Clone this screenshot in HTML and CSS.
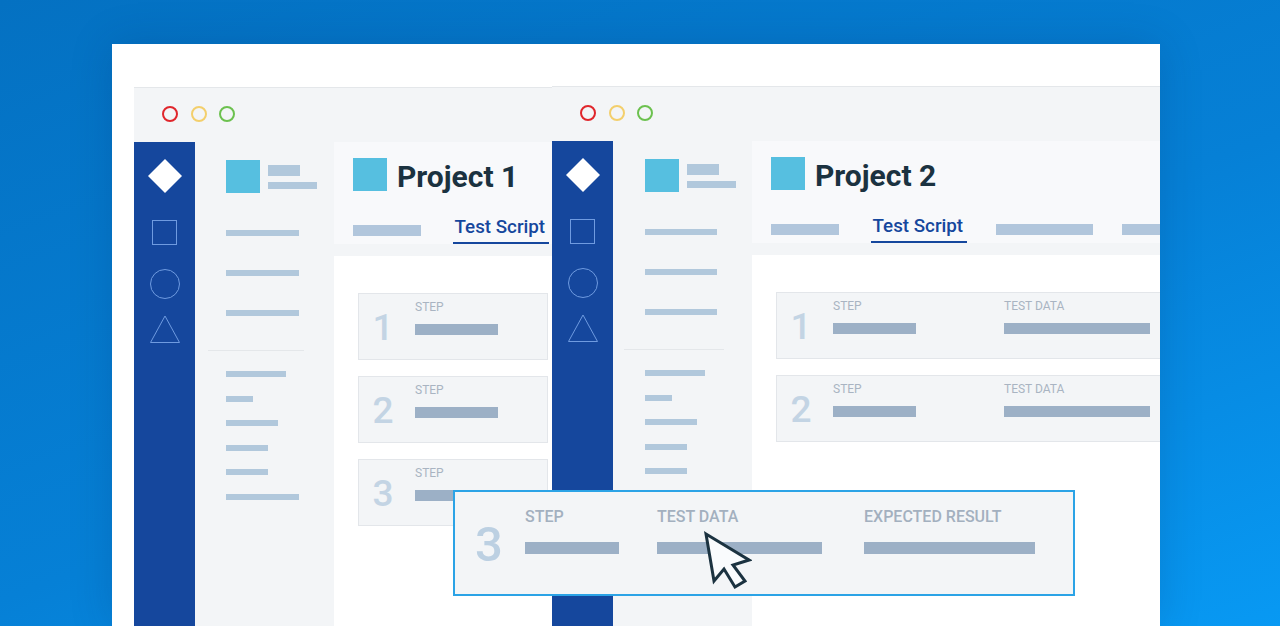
FILE: index.html
```html
<!DOCTYPE html>
<html lang="en">
<head>
  <meta charset="UTF-8" />
  <title>Test Script Projects</title>
  <link rel="stylesheet" href="styles.css">
</head>
<body>

  <div class="sheet">

    <!-- Project 1 window -->
    <div class="window window-one">
      <div class="titlebar">
        <span class="dot dot-red"></span>
        <span class="dot dot-yellow"></span>
        <span class="dot dot-green"></span>
      </div>
      <div class="window-body">
        <div class="rail">
          <svg class="rail-diamond" width="34" height="34" viewBox="0 0 34 34"><path d="M17 0L34 17L17 34L0 17Z" fill="#fff"/></svg>
          <svg class="rail-square" width="25" height="25" viewBox="0 0 25 25"><rect x=".5" y=".5" width="24" height="24" fill="none" stroke="#6f9be0"/></svg>
          <svg class="rail-circle" width="30" height="30" viewBox="0 0 30 30"><circle cx="15" cy="15" r="14.5" fill="none" stroke="#6f9be0"/></svg>
          <svg class="rail-triangle" width="30" height="28" viewBox="0 0 30 28"><path d="M15 1L29.5 27.5H.5Z" fill="none" stroke="#6f9be0"/></svg>
        </div>
        <div class="panel">
          <div class="panel-logo">
            <span class="logo"></span>
            <div class="logo-lines">
              <span class="bar line-short"></span>
              <span class="bar line-long"></span>
            </div>
          </div>
          <div class="nav">
            <span class="bar nav-bar w-73"></span>
            <span class="bar nav-bar w-73"></span>
            <span class="bar nav-bar w-73"></span>
          </div>
          <div class="divider"></div>
          <div class="subnav">
            <span class="bar nav-bar w-60"></span>
            <span class="bar nav-bar w-27"></span>
            <span class="bar nav-bar w-52"></span>
            <span class="bar nav-bar w-42"></span>
            <span class="bar nav-bar w-42"></span>
            <span class="bar nav-bar w-73"></span>
          </div>
        </div>
        <div class="main">
          <div class="header">
            <div class="title-row">
              <span class="logo"></span>
              <h1>Project 1</h1>
            </div>
            <div class="tabs">
              <span class="bar tab-bar w-68"></span>
              <span class="tab">Test Script</span>
            </div>
          </div>
          <div class="band"></div>
          <div class="steps">
            <div class="step">
              <span class="step-num">1</span>
              <div class="step-col">
                <span class="step-label">STEP</span>
                <span class="bar step-bar w-83"></span>
              </div>
            </div>
            <div class="step">
              <span class="step-num">2</span>
              <div class="step-col">
                <span class="step-label">STEP</span>
                <span class="bar step-bar w-83"></span>
              </div>
            </div>
            <div class="step">
              <span class="step-num">3</span>
              <div class="step-col">
                <span class="step-label">STEP</span>
                <span class="bar step-bar w-83"></span>
              </div>
            </div>
          </div>
        </div>
      </div>
    </div>

    <!-- Project 2 window -->
    <div class="window window-two">
      <div class="titlebar">
        <span class="dot dot-red"></span>
        <span class="dot dot-yellow"></span>
        <span class="dot dot-green"></span>
      </div>
      <div class="window-body">
        <div class="rail">
          <svg class="rail-diamond" width="34" height="34" viewBox="0 0 34 34"><path d="M17 0L34 17L17 34L0 17Z" fill="#fff"/></svg>
          <svg class="rail-square" width="25" height="25" viewBox="0 0 25 25"><rect x=".5" y=".5" width="24" height="24" fill="none" stroke="#6f9be0"/></svg>
          <svg class="rail-circle" width="30" height="30" viewBox="0 0 30 30"><circle cx="15" cy="15" r="14.5" fill="none" stroke="#6f9be0"/></svg>
          <svg class="rail-triangle" width="30" height="28" viewBox="0 0 30 28"><path d="M15 1L29.5 27.5H.5Z" fill="none" stroke="#6f9be0"/></svg>
        </div>
        <div class="panel">
          <div class="panel-logo">
            <span class="logo"></span>
            <div class="logo-lines">
              <span class="bar line-short"></span>
              <span class="bar line-long"></span>
            </div>
          </div>
          <div class="nav">
            <span class="bar nav-bar w-72"></span>
            <span class="bar nav-bar w-72"></span>
            <span class="bar nav-bar w-72"></span>
          </div>
          <div class="divider"></div>
          <div class="subnav">
            <span class="bar nav-bar w-60"></span>
            <span class="bar nav-bar w-27"></span>
            <span class="bar nav-bar w-52"></span>
            <span class="bar nav-bar w-42"></span>
            <span class="bar nav-bar w-42"></span>
            <span class="bar nav-bar w-72"></span>
          </div>
        </div>
        <div class="main">
          <div class="header">
            <div class="title-row">
              <span class="logo"></span>
              <h1>Project 2</h1>
            </div>
            <div class="tabs">
              <span class="bar tab-bar w-68"></span>
              <span class="tab">Test Script</span>
              <span class="bar tab-bar w-97"></span>
              <span class="bar tab-bar w-68"></span>
            </div>
          </div>
          <div class="band"></div>
          <div class="steps">
            <div class="step">
              <span class="step-num">1</span>
              <div class="step-col">
                <span class="step-label">STEP</span>
                <span class="bar step-bar w-83"></span>
              </div>
              <div class="step-col">
                <span class="step-label">TEST DATA</span>
                <span class="bar step-bar w-146"></span>
              </div>
            </div>
            <div class="step">
              <span class="step-num">2</span>
              <div class="step-col">
                <span class="step-label">STEP</span>
                <span class="bar step-bar w-83"></span>
              </div>
              <div class="step-col">
                <span class="step-label">TEST DATA</span>
                <span class="bar step-bar w-146"></span>
              </div>
            </div>
          </div>
        </div>
      </div>
    </div>

    <!-- Highlighted step -->
    <div class="focus-step">
      <span class="focus-num">3</span>
      <div class="focus-col">
        <span class="focus-label">STEP</span>
        <span class="bar focus-bar w-94"></span>
      </div>
      <div class="focus-col">
        <span class="focus-label">TEST DATA</span>
        <span class="bar focus-bar w-165"></span>
      </div>
      <div class="focus-col">
        <span class="focus-label">EXPECTED RESULT</span>
        <span class="bar focus-bar w-171"></span>
      </div>
    </div>

    <svg class="cursor" width="50" height="60" viewBox="0 0 50 60">
      <path d="M4 3L47 29L31 34L43 50L33 56L22 38L12 50Z" fill="#f9fbfd" stroke="#1b3240" stroke-width="3" stroke-linejoin="miter"/>
    </svg>
  </div>

</body>
</html>
```

FILE: styles.css
```css
html, body {
  height: 100%;
}
body {
  margin: 0;
  overflow: hidden;
  box-sizing: border-box;
  padding: 44px 0 0 112px;
  font-family: 'Roboto', 'Liberation Sans', sans-serif;
  background: linear-gradient(160deg, #0471c2 0%, #0680d6 55%, #0899f3 100%);
}
.sheet {
  position: relative;
  width: 1048px;
  height: 582px;
  background: #fff;
  overflow: hidden;
  box-shadow: 0 0 40px rgba(0, 40, 90, 0.18);
}
.bar {
  display: block;
  background: #b1c8dc;
}

/* windows */
.window {
  position: absolute;
  display: flex;
  flex-direction: column;
  background: #f3f5f7;
  box-sizing: border-box;
}
.window-one {
  left: 22px;
  top: 43px;
  width: 418px;
  height: 539px;
  overflow: hidden;
  border-top: 1px solid #e4e7ea;
}
.window-two {
  left: 440px;
  top: 42px;
  width: 640px;
  height: 540px;
  border-top: 1px solid #e4e7ea;
}
.titlebar {
  display: flex;
  align-items: center;
  gap: 12.5px;
  height: 54px;
  box-sizing: border-box;
  padding: 0 0 2px 28px;
  flex-shrink: 0;
}
.dot {
  width: 12px;
  height: 12px;
  border-radius: 50%;
  border: 2px solid;
}
.dot-red { border-color: #e0262c; }
.dot-yellow { border-color: #f3cf6c; }
.dot-green { border-color: #6cc14f; }

.window-body {
  display: flex;
  flex: 1;
}

/* left rail */
.rail {
  width: 61px;
  flex-shrink: 0;
  background: #15479d;
  display: flex;
  flex-direction: column;
  align-items: center;
  padding-top: 17px;
}
.rail svg {
  display: block;
}
.rail-square { margin-top: 27px; }
.rail-circle { margin-top: 24px; }
.rail-triangle { margin-top: 16px; }

/* side panel */
.panel {
  width: 139px;
  flex-shrink: 0;
  box-sizing: border-box;
  padding: 18px 0 0 31px;
}
.window-two .panel {
  padding-left: 32px;
}
.panel-logo {
  display: flex;
  align-items: center;
  gap: 8px;
}
.logo {
  display: block;
  width: 34px;
  height: 33px;
  background: #56bfe0;
  flex-shrink: 0;
}
.logo-lines {
  display: flex;
  flex-direction: column;
  gap: 6px;
}
.line-short { width: 32px; height: 11px; }
.line-long { width: 49px; height: 7px; }
.nav {
  display: flex;
  flex-direction: column;
  gap: 34px;
  margin-top: 37px;
}
.nav-bar { height: 6px; }
.divider {
  width: 96px;
  height: 1px;
  margin: 34px 0 20px -18px;
  background: #e4e7ea;
}
.window-two .divider {
  width: 100px;
  margin-left: -21px;
}
.subnav {
  display: flex;
  flex-direction: column;
  gap: 18.6px;
}
.w-27 { width: 27px; }
.w-42 { width: 42px; }
.w-52 { width: 52px; }
.w-60 { width: 60px; }
.w-68 { width: 68px; }
.w-72 { width: 72px; }
.w-73 { width: 73px; }
.w-83 { width: 83px; }
.w-94 { width: 94px; }
.w-97 { width: 97px; }
.w-146 { width: 146px; }
.w-165 { width: 165px; }
.w-171 { width: 171px; }

/* main column */
.main {
  flex: 1;
  display: flex;
  flex-direction: column;
  background: #fff;
}
.header {
  height: 102px;
  box-sizing: border-box;
  padding: 16px 0 0 19px;
  background: #f8f9fb;
}
.band {
  height: 12px;
  background: #f3f5f7;
}
.title-row {
  display: flex;
  align-items: flex-start;
  gap: 10px;
}
h1 {
  margin: 1px 0 0;
  font-size: 30px;
  line-height: 36px;
  font-weight: 700;
  color: #1b3240;
}
.tabs {
  display: flex;
  align-items: flex-start;
  gap: 29px;
  margin-top: 26px;
}
.tab-bar {
  height: 11px;
  margin-top: 4px;
  background: #b1c6dc;
  flex-shrink: 0;
}
.tab-bar:first-child {
  margin-right: 3px;
}
.tab {
  width: 96px;
  box-sizing: border-box;
  padding: 0 1.5px;
  height: 26px;
  line-height: 18px;
  margin-top: -3px;
  font-size: 18.8px;
  font-weight: 500;
  white-space: nowrap;
  color: #15479d;
  border-bottom: 2px solid #15479d;
  flex-shrink: 0;
}

/* step rows */
.steps {
  display: flex;
  flex-direction: column;
  gap: 16px;
  padding: 37px 0 0 24px;
}
.step {
  display: flex;
  height: 67px;
  box-sizing: border-box;
  width: 190px;
  background: #f3f5f7;
  border: 1px solid #e3e6ea;
}
.window-two .step {
  width: 420px;
}
.step-num {
  width: 48px;
  text-align: center;
  font-size: 37px;
  font-weight: 500;
  line-height: 67px;
  color: #c3d4e4;
  flex-shrink: 0;
}
.step-col {
  padding: 6px 0 0 8px;
  width: 163px;
  flex-shrink: 0;
}
.step-label {
  display: block;
  font-size: 12px;
  line-height: 14px;
  color: #a9b4c2;
}
.step-bar {
  height: 11px;
  margin-top: 10px;
  background: #9cb0c6;
}

/* highlighted row on top of both windows */
.focus-step {
  position: absolute;
  left: 341px;
  top: 446px;
  width: 622px;
  height: 106px;
  box-sizing: border-box;
  display: flex;
  background: #f3f5f7;
  border: 2px solid #2ba3e6;
}
.focus-num {
  width: 70px;
  padding-left: 20px;
  box-sizing: border-box;
  font-size: 49px;
  font-weight: 500;
  line-height: 106px;
  color: #bcd0e2;
  flex-shrink: 0;
}
.focus-col {
  padding-top: 16px;
  flex-shrink: 0;
}
.focus-col:nth-child(2) { width: 132px; }
.focus-col:nth-child(3) { width: 207px; }
.focus-label {
  display: block;
  font-size: 16px;
  font-weight: 500;
  line-height: 18px;
  color: #a3b0bf;
}
.focus-bar {
  height: 12px;
  margin-top: 16px;
  background: #9cb0c6;
}
.cursor {
  position: absolute;
  left: 590px;
  top: 487px;
}
```
